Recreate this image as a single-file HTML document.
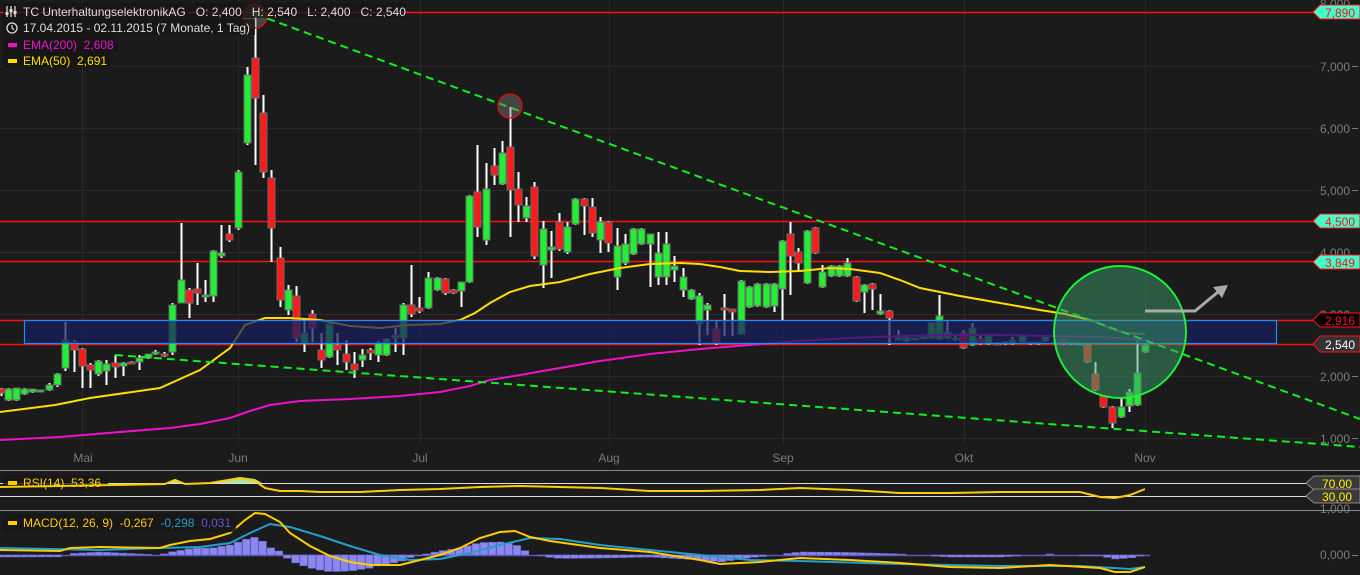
<!DOCTYPE html>
<html><head><meta charset="utf-8"><style>
html,body{margin:0;padding:0;background:#1c1b1b;width:1360px;height:575px;overflow:hidden}
svg{display:block;font-family:"Liberation Sans",sans-serif}
text{white-space:pre}
</style></head><body>
<svg id="s" width="1360" height="575" viewBox="0 0 1360 575" xmlns="http://www.w3.org/2000/svg">
<rect width="1360" height="575" fill="#1c1b1b"/>
<g stroke="#2a2a2a" stroke-width="1">
<line x1="0" y1="66.5" x2="1313" y2="66.5"/><line x1="0" y1="128.5" x2="1313" y2="128.5"/><line x1="0" y1="190.5" x2="1313" y2="190.5"/><line x1="0" y1="252.5" x2="1313" y2="252.5"/><line x1="0" y1="314.5" x2="1313" y2="314.5"/><line x1="0" y1="376.5" x2="1313" y2="376.5"/><line x1="0" y1="438.5" x2="1313" y2="438.5"/>
<line x1="82.5" y1="0" x2="82.5" y2="445"/><line x1="238.5" y1="0" x2="238.5" y2="445"/><line x1="420.5" y1="0" x2="420.5" y2="445"/><line x1="609.5" y1="0" x2="609.5" y2="445"/><line x1="783.5" y1="0" x2="783.5" y2="445"/><line x1="964.5" y1="0" x2="964.5" y2="445"/><line x1="1145.5" y1="0" x2="1145.5" y2="445"/>
</g>
<g fill="#7a7a7a" font-size="12" text-anchor="end">
<text x="1350" y="8">8,000</text><text x="1350" y="71">7,000</text><text x="1350" y="133">6,000</text><text x="1350" y="195">5,000</text><text x="1350" y="257">4,000</text><text x="1350" y="319">3,000</text><text x="1350" y="381">2,000</text><text x="1350" y="443">1,000</text>
</g>
<g stroke="#7a7a7a"><line x1="1352" y1="66.5" x2="1358" y2="66.5"/><line x1="1352" y1="128.5" x2="1358" y2="128.5"/><line x1="1352" y1="190.5" x2="1358" y2="190.5"/><line x1="1352" y1="376.5" x2="1358" y2="376.5"/><line x1="1352" y1="438.5" x2="1358" y2="438.5"/></g>
<g stroke="#ff1010" stroke-width="1.5">
<line x1="0" y1="12.5" x2="1315" y2="12.5"/><line x1="0" y1="221.5" x2="1315" y2="221.5"/><line x1="0" y1="261.5" x2="1315" y2="261.5"/><line x1="0" y1="320.5" x2="1315" y2="320.5"/><line x1="0" y1="344.5" x2="1315" y2="344.5"/>
</g>
<g id="cd"></g>
<polyline fill="none" stroke="#ee11cc" stroke-width="2" points="0,440 60,437 120,432 170,428 200,424 230,418 250,411 270,405 300,401 350,399 400,396 440,392 470,386 490,380 520,375 560,368 600,361 650,354 700,349 750,345 800,341 850,338 900,336 950,335 1000,335 1050,336 1100,337 1145,340"/>
<polyline fill="none" stroke="#ffdd00" stroke-width="2" points="0,412 55,405 90,398 160,388 200,370 230,348 245,325 265,318 290,318 320,320 350,326 380,328 410,325 440,324 460,320 475,313 490,303 510,292 530,286 560,282 590,274 620,268 650,264 680,263 700,264 720,267 740,271 770,272 800,271 830,268 850,269 880,273 900,280 920,288 940,292 960,296 1000,303 1040,310 1065,314 1090,320 1110,328 1125,333 1145,334"/>
<rect x="24.5" y="320.5" width="1252" height="23" fill="#181e5e" fill-opacity="0.72" stroke="#1a90ff" stroke-width="1.2"/>
<g stroke="#11ee22" stroke-width="2" stroke-dasharray="8,5" fill="none">
<line x1="255" y1="14" x2="1360" y2="419"/><line x1="115" y1="355" x2="1360" y2="447"/>
</g>
<circle cx="255" cy="16" r="12" fill="#777" fill-opacity="0.45" stroke="#dd1111" stroke-width="1.3"/>
<circle cx="510" cy="106" r="12" fill="#777" fill-opacity="0.45" stroke="#dd1111" stroke-width="1.3"/>
<circle cx="1120" cy="332" r="66" fill="#3a9a6a" fill-opacity="0.5" stroke="#22ee33" stroke-width="2"/>
<polyline points="1145,311 1195,311 1218,292" fill="none" stroke="#aaaaaa" stroke-width="3"/>
<polygon points="1228,285 1213,287 1222,298" fill="#aaaaaa"/>
<g font-size="12" text-anchor="end">
<polygon points="1313,12 1320,5 1360,5 1360,19 1320,19" fill="#44ffcc" stroke="#ff1010"/><text x="1355" y="17" fill="#ff1010">7,890</text>
<polygon points="1313,221 1320,214 1360,214 1360,228 1320,228" fill="#44ffcc" stroke="#ff1010"/><text x="1355" y="226" fill="#ff1010">4,500</text>
<polygon points="1313,262 1320,255 1360,255 1360,269 1320,269" fill="#44ffcc" stroke="#ff1010"/><text x="1355" y="267" fill="#ff1010">3,849</text>
<polygon points="1313,320 1320,313 1360,313 1360,327 1320,327" fill="#000" stroke="#ff1010"/><text x="1355" y="325" fill="#ff1010">2,916</text>
<polygon points="1313,344 1320,336 1360,336 1360,352 1320,352" fill="#333" stroke="#ff1010"/><text x="1355" y="349" fill="#ffffff">2,540</text>
</g>
<g fill="#7a7a7a" font-size="12" text-anchor="middle">
<text x="83" y="462">Mai</text><text x="238" y="462">Jun</text><text x="420" y="462">Jul</text><text x="609" y="462">Aug</text><text x="783" y="462">Sep</text><text x="964" y="462">Okt</text><text x="1145" y="462">Nov</text>
</g>
<line x1="0" y1="470.5" x2="1360" y2="470.5" stroke="#888"/>
<line x1="0" y1="510.5" x2="1360" y2="510.5" stroke="#888"/>
<line x1="0" y1="483.5" x2="1313" y2="483.5" stroke="#dddddd"/>
<line x1="0" y1="496.5" x2="1313" y2="496.5" stroke="#dddddd"/>
<polygon points="165,483 175,479 185,483 210,483 240,477 255,479 262,483" fill="#a8e8a0"/>
<rect x="3" y="475" width="105" height="16" fill="#161616" fill-opacity="0.8"/>
<polyline fill="none" stroke="#ffcc00" stroke-width="2" points="0,487 60,486 165,484 175,480 185,484 210,483 240,478 255,481 265,488 280,491 300,491 320,492 360,492 400,490 440,489 480,487 520,486 560,487 600,488 650,491 700,491 760,490 800,488 850,490 900,493 950,493 1000,492 1050,492 1080,492 1100,497 1115,498 1130,495 1145,489"/>
<rect x="8" y="481" width="9" height="4" fill="#ffcc00"/>
<text x="23" y="487" fill="#ffcc00" font-size="12">RSI(14)  53,36</text>
<g font-size="12" text-anchor="end">
<polygon points="1306,483 1314,476 1360,476 1360,490 1314,490" fill="#3a3a3a" stroke="#888"/><text x="1352" y="488" fill="#ffee00">70,00</text>
<polygon points="1306,496 1314,489 1360,489 1360,503 1314,503" fill="#3a3a3a" stroke="#888"/><text x="1352" y="501" fill="#ffee00">30,00</text>
</g>
<text x="1350" y="513" fill="#7a7a7a" font-size="12" text-anchor="end">1,000</text>
<text x="1350" y="559" fill="#7a7a7a" font-size="12" text-anchor="end">0,000</text>
<line x1="1352" y1="555.5" x2="1358" y2="555.5" stroke="#7a7a7a"/>
<line x1="0" y1="555.5" x2="1150" y2="555.5" stroke="#5555bb" stroke-width="1.5"/>
<g id="hist"></g>
<polyline id="teal" fill="none" stroke="#22a0cc" stroke-width="2" points="0,548 100,550 160,548 200,547 230,543 250,533 270,524 290,527 320,536 350,546 380,555 410,560 440,559 470,553 500,545 530,538 560,539 600,545 650,550 700,555 750,560 800,561 900,564 1000,566 1080,566 1130,569 1145,567"/>
<polyline id="yel" fill="none" stroke="#ffcc00" stroke-width="2" points="0,550 60,551 70,548 100,547 160,548 170,545 190,541 210,539 230,533 245,520 255,513 265,514 280,522 290,533 310,546 330,556 350,562 370,565 400,565 420,560 440,555 460,548 480,538 500,532 515,531 530,537 550,541 600,548 650,552 700,560 720,564 760,562 800,558 850,560 900,563 950,567 1000,568 1050,565 1100,568 1115,572 1130,572 1145,567"/>
<rect x="3" y="514" width="233" height="18" fill="#161616" fill-opacity="0.85"/>
<rect x="8" y="521" width="9" height="4" fill="#ffcc00"/>
<text x="23" y="527" font-size="12"><tspan fill="#ffcc00">MACD(12, 26, 9)  -0,267  </tspan><tspan fill="#22a0cc">-0,298  </tspan><tspan fill="#6655cc">0,031</tspan></text>
<rect x="3" y="3" width="402" height="15" fill="#161616" fill-opacity="0.75"/>
<rect x="3" y="19" width="252" height="16" fill="#161616" fill-opacity="0.75"/>
<rect x="3" y="36" width="115" height="16" fill="#161616" fill-opacity="0.75"/>
<rect x="3" y="52" width="108" height="16" fill="#161616" fill-opacity="0.75"/>
<g stroke="#ddd" stroke-width="1.3" fill="none"><line x1="7" y1="6" x2="7" y2="17"/><line x1="11" y1="6" x2="11" y2="17"/><line x1="15" y1="6" x2="15" y2="17"/></g>
<g fill="#ddd"><rect x="5.5" y="12" width="3" height="3"/><rect x="9.5" y="9" width="3" height="3"/><rect x="13.5" y="11" width="3" height="3"/></g>
<text x="23" y="16" fill="#dddddd" font-size="12">TC UnterhaltungselektronikAG   O: 2,400   H: 2,540   L: 2,400   C: 2,540</text>
<circle cx="12" cy="28" r="5" fill="none" stroke="#ddd" stroke-width="1.3"/><path d="M12,25 V28 L14,30" fill="none" stroke="#ddd" stroke-width="1.2"/>
<text x="23" y="32" fill="#dddddd" font-size="12">17.04.2015 - 02.11.2015 (7 Monate, 1 Tag)</text>
<rect x="8" y="43" width="9" height="4" fill="#ee11cc"/>
<text x="23" y="49" fill="#ee11cc" font-size="12">EMA(200)  2,608</text>
<rect x="8" y="59" width="9" height="4" fill="#ffdd00"/>
<text x="23" y="65" fill="#ffdd00" font-size="12">EMA(50)  2,691</text>
</svg>
<script>
(function(){
var NS="http://www.w3.org/2000/svg";
var C=[[1,389,393,388,396,'r'],[8,389,400,388,401,'g'],[16,388,400,388,401,'g'],[24,389,394,388,395,'g'],[32,389,392,389,393,'g'],[40,390,391,390,392,'g'],[49,385,390,383,391,'g'],[57,374,385,373,387,'g'],[65,340,368,322,371,'g'],[74,342,350,340,372,'r'],[82,349,366,348,388,'r'],[90,365,370,363,388,'r'],[98,361,374,360,376,'g'],[106,364,371,360,385,'g'],[115,363,367,355,378,'r'],[123,363,366,362,376,'g'],[131,362,363,361,364,'r'],[139,358,362,355,370,'g'],[148,354,358,354,359,'g'],[155,352,353,350,355,'g'],[164,354,355,352,357,'r'],[172,305,352,303,355,'g'],[181,280,303,223,303,'g'],[189,290,303,288,318,'r'],[197,289,293,263,305,'r'],[205,295,297,280,302,'g'],[213,251,296,250,302,'g'],[221,253,256,225,258,'g'],[229,234,240,225,242,'r'],[238,172,228,170,230,'g'],[247,75,143,67,145,'g'],[255,58,98,12,165,'r'],[263,113,172,95,178,'r'],[271,178,228,170,262,'r'],[280,258,300,247,307,'r'],[288,290,310,285,315,'g'],[296,296,338,286,342,'r'],[304,333,344,318,352,'g'],[312,314,328,310,342,'r'],[321,350,360,333,368,'r'],[329,324,357,322,358,'g'],[337,345,350,333,365,'r'],[346,354,362,340,370,'r'],[354,364,370,352,378,'r'],[362,355,360,349,367,'g'],[370,350,353,348,360,'r'],[378,343,355,341,362,'g'],[386,339,355,338,356,'g'],[395,335,338,328,352,'g'],[403,305,338,303,355,'g'],[411,305,314,265,317,'r'],[419,308,311,297,313,'r'],[428,278,308,272,309,'g'],[437,278,290,277,291,'g'],[445,279,293,278,295,'r'],[453,290,293,289,294,'r'],[461,282,291,282,307,'g'],[469,196,282,195,283,'g'],[477,192,227,145,237,'r'],[486,189,240,163,245,'g'],[494,166,175,148,185,'r'],[502,153,184,141,185,'g'],[510,147,190,107,237,'r'],[518,189,205,172,222,'r'],[526,206,218,197,222,'g'],[534,187,256,182,259,'r'],[543,229,265,221,288,'g'],[551,247,250,231,278,'g'],[559,222,249,213,251,'r'],[567,227,252,222,254,'g'],[575,199,224,198,225,'g'],[584,199,206,198,235,'r'],[592,207,233,198,237,'r'],[600,222,240,217,253,'g'],[608,222,243,221,252,'r'],[617,246,277,228,290,'g'],[625,244,263,234,265,'g'],[633,229,254,228,255,'g'],[641,229,244,228,245,'g'],[650,234,244,234,287,'g'],[658,253,277,232,285,'g'],[666,244,277,232,285,'g'],[674,266,270,256,282,'g'],[683,277,290,268,297,'g'],[691,290,299,289,300,'g'],[699,296,324,293,345,'g'],[707,305,310,303,335,'g'],[716,329,343,321,345,'r'],[724,308,310,294,336,'r'],[732,309,312,309,336,'r'],[741,281,334,280,335,'g'],[749,287,307,286,308,'g'],[757,284,306,283,307,'g'],[766,284,307,283,308,'g'],[774,284,306,283,312,'g'],[782,241,289,240,320,'g'],[790,234,256,222,295,'r'],[798,252,263,248,272,'r'],[807,231,283,230,284,'g'],[815,228,253,227,254,'r'],[822,272,287,265,288,'g'],[831,266,276,265,277,'g'],[839,266,276,265,277,'g'],[847,263,276,258,277,'g'],[856,277,301,276,302,'r'],[864,285,292,284,313,'g'],[872,284,289,283,310,'r'],[880,311,314,294,315,'g'],[889,311,318,310,345,'r'],[898,338,339,330,340,'g'],[906,338,341,337,342,'g'],[914,338,339,338,340,'g'],[923,337,338,336,339,'g'],[931,323,338,322,339,'g'],[939,316,339,295,340,'g'],[947,332,338,321,339,'g'],[955,338,340,334,341,'g'],[963,333,348,330,349,'r'],[972,328,345,323,346,'g'],[980,339,344,336,345,'r'],[988,336,344,335,345,'g'],[997,343,344,342,345,'r'],[1005,342,344,341,345,'g'],[1012,340,344,337,345,'g'],[1022,336,342,335,343,'g'],[1030,342,344,342,345,'g'],[1038,342,344,342,345,'g'],[1045,336,341,335,342,'g'],[1055,342,344,342,345,'g'],[1063,339,344,338,345,'r'],[1071,342,344,342,345,'g'],[1079,343,344,342,345,'g'],[1087,345,362,344,363,'r'],[1095,374,390,362,391,'r'],[1103,396,407,395,408,'r'],[1112,407,423,406,428,'r'],[1121,407,417,397,418,'g'],[1129,392,406,389,412,'g'],[1137,373,405,340,406,'g'],[1145,345,352,344,353,'g']];
var g=document.getElementById('cd');
C.forEach(function(c){
 var l=document.createElementNS(NS,'line');
 l.setAttribute('x1',c[0]+0.5);l.setAttribute('x2',c[0]+0.5);l.setAttribute('y1',c[3]);l.setAttribute('y2',c[4]);
 l.setAttribute('stroke','#ffffff');l.setAttribute('stroke-width','2');g.appendChild(l);
 var r=document.createElementNS(NS,'rect');
 r.setAttribute('x',c[0]-3);r.setAttribute('y',c[1]);r.setAttribute('width',7);r.setAttribute('height',Math.max(2,c[2]-c[1]));
 r.setAttribute('fill',c[5]=='g'?'#22ee33':'#ff1a1a');r.setAttribute('stroke','#6a6a6a');r.setAttribute('stroke-width','1');g.appendChild(r);
});
function interp(pts,x){for(var i=1;i<pts.length;i++){if(x<=pts[i][0]){var a=pts[i-1],b=pts[i];return a[1]+(b[1]-a[1])*(x-a[0])/(b[0]-a[0]);}}return pts[pts.length-1][1];}
function parse(s){return s.trim().split(/\s+/).map(function(p){return p.split(',').map(Number);});}
var teal=parse(document.getElementById('teal').getAttribute('points')),yel=parse(document.getElementById('yel').getAttribute('points'));
var h=document.getElementById('hist');
for(var x=0;x<=1145;x+=8.2){
 var d=interp(teal,x)-interp(yel,x);
 if(Math.abs(d)<0.6)continue;
 if(Math.abs(d)>25)d=d>0?25:-25;
 var r=document.createElementNS(NS,'rect');
 var ty=d>0?555-d:555;
 r.setAttribute('x',x-3.5);r.setAttribute('y',ty);r.setAttribute('width',7.5);r.setAttribute('height',Math.abs(d));
 r.setAttribute('fill','#8a88ee');r.setAttribute('stroke','#6a66cc');r.setAttribute('stroke-width','0.6');h.appendChild(r);
}
})();
</script>
</body></html>
